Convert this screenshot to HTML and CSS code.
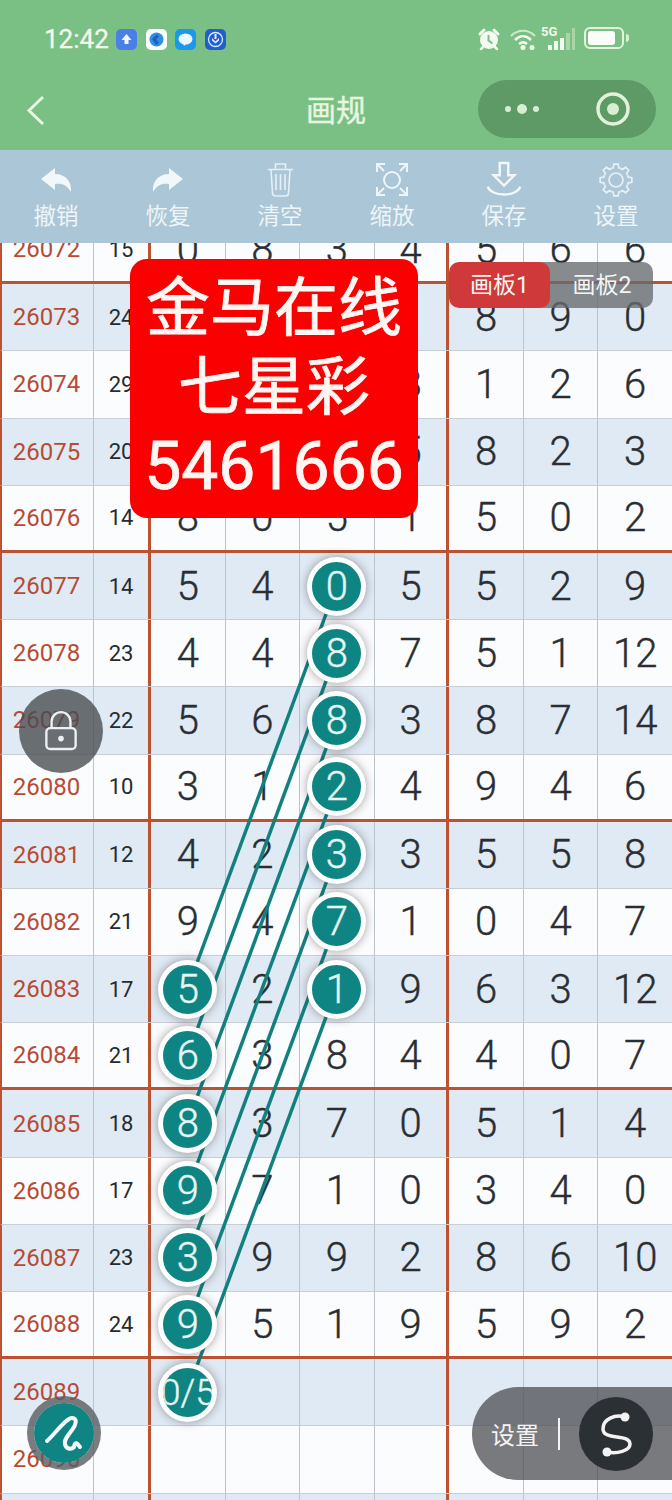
FILE: index.html
```html
<!DOCTYPE html>
<html lang="zh">
<head>
<meta charset="utf-8">
<title>画规</title>
<link rel="stylesheet" href="styles.css">
</head>
<body>
<div class="app">
  <header class="top">
    <div class="status">
      <span class="time">12:42</span>
      <div class="apps">
        <svg class="app-ico" viewBox="0 0 21 21"><rect width="21" height="21" rx="5" fill="#4a80e6"/><path d="M10.5 5l5 6h-3v4h-4v-4h-3z" fill="#f2f6ff"/></svg>
        <svg class="app-ico" viewBox="0 0 21 21"><rect width="21" height="21" rx="5" fill="#fbfdff"/><circle cx="10.5" cy="10.5" r="7" fill="#2f8fe0"/><path d="M6 10l5-5 2 3-3 2 3 4-3 2z" fill="#1f5fc0"/></svg>
        <svg class="app-ico" viewBox="0 0 21 21"><rect width="21" height="21" rx="5" fill="#1b97ee"/><ellipse cx="10.5" cy="10" rx="7" ry="5.5" fill="#eef7ff"/><path d="M8 14l4 0-3 3z" fill="#eef7ff"/></svg>
        <svg class="app-ico" viewBox="0 0 21 21"><rect width="21" height="21" rx="5" fill="#1f5fd0"/><circle cx="10.5" cy="10.5" r="7" fill="none" stroke="#dbe8ff" stroke-width="1.3"/><path d="M7 9l3.500 3.500L14 9v2.500l-3.500 3-3.500-3z" fill="#e6efff"/><path d="M9.500 5h2v5h-2z" fill="#e6efff"/></svg>
      </div>
      <div class="sys">
        <svg class="alarm" viewBox="0 0 24 24"><circle cx="12" cy="13" r="9" fill="#f4faef"/><path d="M3 7l4-4M21 7l-4-4" stroke="#f4faef" stroke-width="3" stroke-linecap="round"/><path d="M4 22l3-3M20 22l-3-3" stroke="#f4faef" stroke-width="2.500" stroke-linecap="round"/><path d="M11.500 8v5.500l4 3" fill="none" stroke="#7ac084" stroke-width="2"/></svg>
        <svg class="wifi" viewBox="0 0 28 22"><path d="M2 8c7-7 17-7 24 0" fill="none" stroke="#cfe8c9" stroke-width="2"/><path d="M6 12c5-5 11-5 16 0" fill="none" stroke="#f4faef" stroke-width="2.500"/><path d="M10 16c3-2.500 5-2.500 8 0" fill="none" stroke="#f4faef" stroke-width="2.500"/><circle cx="14" cy="19.500" r="2.500" fill="#f4faef"/><circle cx="23" cy="19.500" r="2.500" fill="#f4faef"/></svg>
        <div class="signal">
          <span class="fiveg">5G</span>
          <i class="bar b1"></i><i class="bar b2"></i><i class="bar b3"></i><i class="bar b4"></i><i class="bar b5"></i>
        </div>
        <div class="battery"><i class="cell"></i></div>
        <i class="nub"></i>
      </div>
    </div>
    <nav class="nav">
      <svg class="back" viewBox="0 0 20 32"><path d="M17 3L3 16.500 17 30" fill="none" stroke="#e8f6e0" stroke-width="3"/></svg>
      <h1 class="title">画规</h1>
      <div class="capsule">
        <svg class="dots" viewBox="0 0 38 12"><circle cx="5" cy="6" r="3" fill="#d9edd2"/><circle cx="19" cy="6" r="5" fill="#d9edd2"/><circle cx="33" cy="6" r="3" fill="#d9edd2"/></svg>
        <svg class="target" viewBox="0 0 36 36"><circle cx="18" cy="18" r="15" fill="none" stroke="#e2f2da" stroke-width="3.500"/><circle cx="18" cy="18" r="6" fill="#d9edd2"/></svg>
      </div>
    </nav>
  </header>

  <div class="tools">
    <div class="tool">
      <svg class="tool-ico" viewBox="38 162 36 36"><path d="M41 179L55 168v6c11 0 17 8 16 18-4-7-9-9-16-8v6z" fill="#f2f7fa"/></svg>
      <span>撤销</span>
    </div>
    <div class="tool">
      <svg class="tool-ico" viewBox="150 162 36 36"><path d="M183 179L169 168v6c-11 0-17 8-16 18 4-7 9-9 16-8v6z" fill="#f2f7fa"/></svg>
      <span>恢复</span>
    </div>
    <div class="tool">
      <svg class="tool-ico" viewBox="262 162 36 36"><g fill="none" stroke="#e6f0f5" stroke-width="1.600"><path d="M275.500 168.500v-4.500h10v4.500M268 169.500h25M271 170l1.500 23a3 3 0 0 0 3 3h10a3 3 0 0 0 3-3l1.500-23M276 174v16M280.500 174v16M285 174v16"/></g></svg>
      <span>清空</span>
    </div>
    <div class="tool">
      <svg class="tool-ico" viewBox="374 162 36 36"><g fill="none" stroke="#edf5f9" stroke-width="2"><circle cx="392" cy="180" r="8"/><path d="M377 172v-8h8M377 164l7 7M407 172v-8h-8M407 164l-7 7M377 187v8h8M377 195l7-7M407 187v8h-8M407 195l-7-7"/></g></svg>
      <span>缩放</span>
    </div>
    <div class="tool">
      <svg class="tool-ico" viewBox="486 162 36 38"><g fill="none" stroke="#f2f7fa" stroke-width="2.500"><path d="M499.500 163h9v13h6.500l-11 11-11-11h6.500zM487 188c3 11 31 11 34 0"/></g></svg>
      <span>保存</span>
    </div>
    <div class="tool">
      <svg class="tool-ico" viewBox="-18 -18 36 36"><defs><path id="tooth" d="M-4.780-11.550L-2.810-12.180-2.230-15.840H2.230L2.810-12.180 4.780-11.550"/></defs><g fill="none" stroke="#e6f0f5" stroke-width="1.700"><use href="#tooth"/><use href="#tooth" transform="rotate(45)"/><use href="#tooth" transform="rotate(90)"/><use href="#tooth" transform="rotate(135)"/><use href="#tooth" transform="rotate(180)"/><use href="#tooth" transform="rotate(225)"/><use href="#tooth" transform="rotate(270)"/><use href="#tooth" transform="rotate(315)"/><circle r="7"/></g></svg>
      <span>设置</span>
    </div>
  </div>

  <main class="board">
    <div class="sheet">
      <div class="row sep"><b>26072</b><em>15</em><i>0</i><i>8</i><i>3</i><i class="t">4</i><i>5</i><i>6</i><i>6</i></div>
      <div class="row hl"><b>26073</b><em>24</em><i>2</i><i>6</i><i>4</i><i class="t">1</i><i>8</i><i>9</i><i>0</i></div>
      <div class="row"><b>26074</b><em>29</em><i>7</i><i>9</i><i>5</i><i class="t">8</i><i>1</i><i>2</i><i>6</i></div>
      <div class="row hl"><b>26075</b><em>20</em><i>1</i><i>3</i><i>2</i><i class="t">5</i><i>8</i><i>2</i><i>3</i></div>
      <div class="row sep"><b>26076</b><em>14</em><i>8</i><i>0</i><i>5</i><i class="t">1</i><i>5</i><i>0</i><i>2</i></div>
      <div class="row hl"><b>26077</b><em>14</em><i>5</i><i>4</i><i><span class="ball">0</span></i><i class="t">5</i><i>5</i><i>2</i><i>9</i></div>
      <div class="row"><b>26078</b><em>23</em><i>4</i><i>4</i><i><span class="ball">8</span></i><i class="t">7</i><i>5</i><i>1</i><i>12</i></div>
      <div class="row hl"><b>26079</b><em>22</em><i>5</i><i>6</i><i><span class="ball">8</span></i><i class="t">3</i><i>8</i><i>7</i><i>14</i></div>
      <div class="row sep"><b>26080</b><em>10</em><i>3</i><i>1</i><i><span class="ball">2</span></i><i class="t">4</i><i>9</i><i>4</i><i>6</i></div>
      <div class="row hl"><b>26081</b><em>12</em><i>4</i><i>2</i><i><span class="ball">3</span></i><i class="t">3</i><i>5</i><i>5</i><i>8</i></div>
      <div class="row"><b>26082</b><em>21</em><i>9</i><i>4</i><i><span class="ball">7</span></i><i class="t">1</i><i>0</i><i>4</i><i>7</i></div>
      <div class="row hl"><b>26083</b><em>17</em><i><span class="ball">5</span></i><i>2</i><i><span class="ball">1</span></i><i class="t">9</i><i>6</i><i>3</i><i>12</i></div>
      <div class="row sep"><b>26084</b><em>21</em><i><span class="ball">6</span></i><i>3</i><i>8</i><i class="t">4</i><i>4</i><i>0</i><i>7</i></div>
      <div class="row hl"><b>26085</b><em>18</em><i><span class="ball">8</span></i><i>3</i><i>7</i><i class="t">0</i><i>5</i><i>1</i><i>4</i></div>
      <div class="row"><b>26086</b><em>17</em><i><span class="ball">9</span></i><i>7</i><i>1</i><i class="t">0</i><i>3</i><i>4</i><i>0</i></div>
      <div class="row hl"><b>26087</b><em>23</em><i><span class="ball">3</span></i><i>9</i><i>9</i><i class="t">2</i><i>8</i><i>6</i><i>10</i></div>
      <div class="row sep"><b>26088</b><em>24</em><i><span class="ball">9</span></i><i>5</i><i>1</i><i class="t">9</i><i>5</i><i>9</i><i>2</i></div>
      <div class="row hl"><b>26089</b><em></em><i><span class="ball small">0/5</span></i><i></i><i></i><i class="t"></i><i></i><i></i><i></i></div>
      <div class="row"><b>26090</b><em></em><i></i><i></i><i></i><i class="t"></i><i></i><i></i><i></i></div>
      <div class="row hl"><b></b><em></em><i></i><i></i><i></i><i class="t"></i><i></i><i></i><i></i></div>
    </div>

    <svg class="lines" viewBox="0 243 672 1257">
      <g stroke="#11807f" stroke-width="3.500">
        <path d="M336.400 586L187.300 989"/>
        <path d="M336.400 653L187.300 1056"/>
        <path d="M336.400 720.500L187.300 1123.500"/>
        <path d="M336.400 788L187.300 1190.500"/>
        <path d="M336.400 855L187.300 1258"/>
        <path d="M336.400 922L187.300 1325"/>
        <path d="M336.400 989L187.300 1392"/>
      </g>
    </svg>

    <div class="promo">
      <div class="promo-line">金马在线</div>
      <div class="promo-line">七星彩</div>
      <div class="promo-line">5461666</div>
    </div>

    <div class="tabs">
      <span class="tab off">画板2</span>
      <span class="tab on">画板1</span>
    </div>

    <button class="lock">
      <svg viewBox="0 0 36 44" class="lock-ico"><g fill="none" stroke="#eef0f2" stroke-width="2.500"><path d="M8 20v-8a10 10 0 0 1 20 0v8"/><rect x="2.500" y="19" width="31" height="22" rx="4"/></g><circle cx="18" cy="30" r="3" fill="#eef0f2"/></svg>
    </button>

    <button class="pen">
      <svg viewBox="0 0 60 60" class="pen-ico"><path d="M13 38C20 32 32 15 38 15 44 15 42 22 38 27 34 32 30 37 31 41 32 46 37 47 40 44 41 38 43 40 46 44" fill="none" stroke="#f6fbfb" stroke-width="4" stroke-linecap="round" stroke-linejoin="round"/></svg>
    </button>

    <div class="pill">
      <span class="pill-label">设置</span>
      <i class="pill-div"></i>
      <span class="pill-btn">
        <svg viewBox="0 0 74 74" class="s-ico"><path d="M46 20C36 17 24 22 24 32 24 44 51 36 51 47 51 54 38 57 28 55" fill="none" stroke="#f3f3f3" stroke-width="3.500" stroke-linecap="round"/><circle cx="46" cy="20" r="4.500" fill="#f3f3f3"/><circle cx="28" cy="55" r="4.500" fill="#f3f3f3"/></svg>
      </span>
    </div>
  </main>
</div>
</body>
</html>
```

FILE: styles.css
```css
* { box-sizing: border-box; }
html, body { margin: 0; padding: 0; }
body {
  width: 672px;
  height: 1500px;
  overflow: hidden;
  font-family: Roboto, "Noto Sans CJK SC", sans-serif;
  background: #fbfcfe;
}
.app { display: flex; flex-direction: column; height: 1500px; }

/* header */
.top { background: #7ac084; height: 150px; flex: none; }
.status {
  height: 80px;
  padding: 24px 44px 0 44px;
  display: flex;
  align-items: flex-start;
  color: #f2f9ec;
}
.time { font-size: 26px; line-height: 30px; width: 72px; flex: none; -webkit-text-stroke: 0.3px #f2f9ec; }
.apps { display: flex; gap: 8.500px; margin-top: 5px; }
.app-ico { width: 21px; height: 21px; display: block; }
.sys { margin-left: auto; display: flex; align-items: flex-start; margin-right: -1px; }
.alarm { width: 24px; height: 24px; margin-top: 3px; display: block; }
.wifi { width: 28px; height: 22px; margin: 4px 0 0 8px; display: block; }
.signal {
  position: relative;
  width: 32px;
  height: 24px;
  margin: 2px 0 0 6px;
  display: flex;
  align-items: flex-end;
  gap: 2.500px;
  padding-left: 5px;
}
.fiveg {
  position: absolute;
  left: -2px;
  top: 0;
  font-size: 13px;
  line-height: 12px;
  font-weight: 700;
}
.bar { display: block; width: 3.500px; background: #f4faef; }
.b1 { height: 5px; }
.b2 { height: 9px; }
.b3 { height: 12px; }
.b4 { height: 17px; background: #a9d6a6; }
.b5 { height: 22px; width: 2.500px; background: #a9d6a6; }
.battery {
  width: 40px;
  height: 22px;
  margin: 3px 0 0 9px;
  border: 2px solid #e4f3dc;
  border-radius: 6px;
  padding: 2px;
}
.cell { display: block; width: 27px; height: 14px; background: #fbfdf8; border-radius: 3px; }
.nub { display: block; width: 3px; height: 8px; margin: 10px 0 0 2px; background: #d9edd2; border-radius: 0 3px 3px 0; }

.nav { height: 70px; position: relative; display: flex; align-items: center; justify-content: center; }
.back { position: absolute; left: 26px; top: 14px; width: 20px; height: 32px; }
.title { margin: 0 0 9px; font-size: 30px; line-height: 40px; font-weight: 400; color: #e8f5e0; -webkit-text-stroke: 0.4px #e8f5e0; }
.capsule {
  position: absolute;
  left: 478px;
  top: 0;
  width: 178px;
  height: 58px;
  border-radius: 29px;
  background: #5d9a66;
  display: flex;
  align-items: center;
  padding-left: 25px;
}
.dots { width: 38px; height: 12px; display: block; }
.target { width: 36px; height: 36px; margin-left: 54px; display: block; }

/* toolbar */
.tools {
  height: 93px;
  flex: none;
  background: #abc6d6;
  display: grid;
  grid-template-columns: repeat(6, 112px);
  padding-top: 12px;
  position: relative;
  z-index: 2;
}
.tool { display: flex; flex-direction: column; align-items: center; color: #eef5f8; font-size: 22.500px; }
.tool-ico { width: 36px; height: 36px; display: block; flex: none; overflow: visible; }
.tool span { line-height: 30px; margin-top: 3px; }

/* board */
.board { position: relative; flex: 1; overflow: hidden; }
.sheet { margin-top: -26px; }
.row {
  display: grid;
  grid-template-columns: 92px 57px repeat(7, 1fr);
  height: 67.200px;
  border-left: 2px solid #bd5230;
  background: #fbfcfe;
  margin-right: -1px;
  border-bottom: 1px solid #c8ced4;
}
.row.hl { background: #dfeaf4; }
.row.sep { border-bottom: 3px solid #bd5230; }
.row b, .row em, .row i {
  font-style: normal;
  font-weight: 400;
  display: flex;
  align-items: center;
  justify-content: center;
  position: relative;
  border-right: 1px solid #bcc3ca;
}
.row b { font-size: 24px; color: #b84a35; padding-right: 2px; }
.row em { font-size: 22px; color: #262b30; border-right: 3px solid #bd5230; }
.row i { font-size: 40px; color: #2a2e33; font-weight: 300; -webkit-text-stroke: 0.4px #2a2e33; }
.row i.t { border-right: 3px solid #bd5230; }

.ball {
  position: absolute;
  left: 50%;
  top: 50%;
  width: 59px;
  height: 59px;
  margin: -29.500px 0 0 -29.500px;
  border-radius: 50%;
  border: 5.500px solid #fdfefe;
  background: #0f8583;
  color: #e6f7f5;
  -webkit-text-stroke: 0.4px #e6f7f5;
  display: flex;
  align-items: center;
  justify-content: center;
  box-shadow: 0 0 10px rgba(60, 40, 40, 0.45);
  overflow: hidden;
  z-index: 3;
  white-space: nowrap;
  flex: none;
}
.ball.small { font-size: 37px; }

.lines {
  position: absolute;
  left: 0;
  top: 0;
  width: 672px;
  height: 1257px;
  z-index: 2;
}

.promo {
  position: absolute;
  left: 130px;
  top: 16px;
  width: 288px;
  height: 259px;
  padding-top: 10px;
  background: #fb0000;
  border-radius: 17px;
  color: #fdf6f3;
  text-align: center;
  z-index: 4;
  -webkit-text-stroke: 0.8px #fdf6f3;
}
.promo-line { font-size: 64px; line-height: 79px; }
.promo-line:last-child { font-size: 66px; }

.tabs {
  position: absolute;
  left: 449px;
  top: 19px;
  width: 204px;
  height: 46px;
  z-index: 4;
}
.tab {
  position: absolute;
  top: 0;
  height: 46px;
  padding-bottom: 4px;
  border-radius: 10px;
  display: flex;
  align-items: center;
  justify-content: center;
  color: #f5f5f5;
  font-size: 23px;
}
.tab.on { left: 0; width: 101px; background: #d0393a; }
.tab.off { right: 0; width: 120px; padding-left: 18px; background: rgba(104, 106, 110, 0.78); }

.lock {
  position: absolute;
  left: 19px;
  top: 446px;
  width: 84px;
  height: 84px;
  padding: 0;
  border: 0;
  border-radius: 50%;
  background: rgba(72, 74, 78, 0.78);
  z-index: 4;
  display: flex;
  align-items: center;
  justify-content: center;
}
.lock-ico { width: 34px; height: 42px; display: block; }

.pen {
  position: absolute;
  left: 27px;
  top: 1153px;
  width: 74px;
  height: 74px;
  padding: 0;
  border: 7px solid rgba(90, 92, 96, 0.8);
  border-radius: 50%;
  background: #0f8583;
  background-clip: padding-box;
  z-index: 4;
}
.pen-ico { width: 60px; height: 60px; display: block; }

.pill {
  position: absolute;
  left: 472px;
  top: 1144px;
  width: 200px;
  height: 93px;
  border-radius: 46.500px 0 0 46.500px;
  background: rgba(70, 72, 76, 0.72);
  display: flex;
  align-items: center;
  padding-left: 19px;
  z-index: 4;
  color: #f3f3f3;
  font-size: 24px;
}
.pill-label { width: 50px; flex: none; }
.pill-div { display: block; width: 2px; height: 32px; background: #f3f3f3; margin-left: 17px; flex: none; }
.pill-btn {
  width: 74px;
  height: 74px;
  border-radius: 50%;
  background: #2b3035;
  margin-left: 19px;
  flex: none;
  display: block;
}
.s-ico { width: 74px; height: 74px; display: block; }
```
